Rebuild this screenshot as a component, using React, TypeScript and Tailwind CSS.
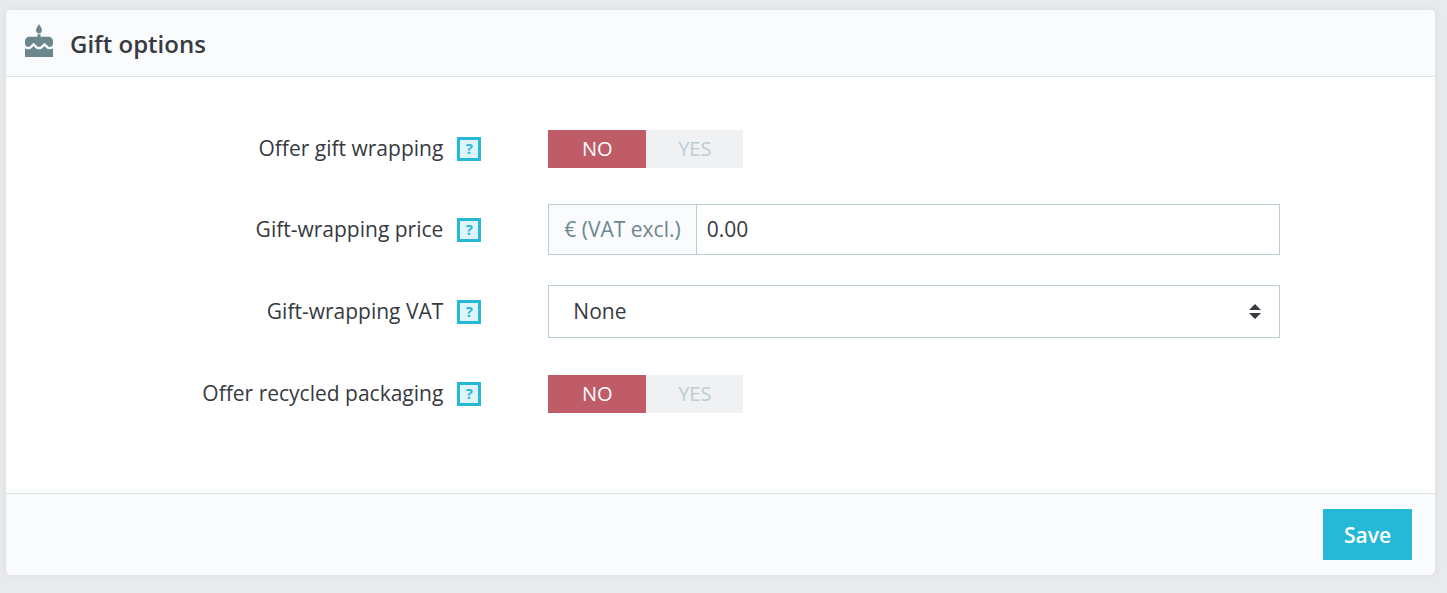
import { useId, useState, type ReactNode } from "react";

function CakeIcon() {
  return (
    <svg viewBox="3 0.8 18 21.2" className="h-[33px] w-7 shrink-0" fill="#6c868e" aria-hidden="true">
      <path d="M12 0.8C11.4 2 10.1 3.3 10.1 4.8c0 1.2.85 2.1 1.9 2.1s1.9-.9 1.9-2.1C13.9 3.3 12.6 2 12 0.8z" />
      <path d="M16.6 15.99l-1.07-1.07-1.08 1.07c-1.3 1.3-3.58 1.31-4.89 0l-1.07-1.07-1.09 1.07C6.75 16.64 5.88 17 4.96 17c-.73 0-1.4-.23-1.96-.61V22h18v-5.61c-.56.38-1.23.61-1.96.61-.92 0-1.79-.36-2.44-1.01z" />
      <path d="M18 9h-5V7.4h-2V9H6c-1.66 0-3 1.34-3 3v1.54c0 1.08.88 1.96 1.96 1.96.52 0 1.02-.2 1.38-.57l2.14-2.13 2.13 2.13c.74.74 2.03.74 2.77 0l2.14-2.13 2.13 2.13c.37.37.86.57 1.38.57 1.08 0 1.96-.88 1.96-1.96V12C21 10.34 19.66 9 18 9z" />
    </svg>
  );
}

function Row({ id, label, children }: { id: string; label: string; children: ReactNode }) {
  return (
    <div className="flex min-h-[51px] items-center">
      <div className="flex w-1/3 items-center justify-end gap-[14px] pr-px">
        <label id={`${id}-label`} htmlFor={id} className="pb-0.5 text-right">
          {label}
        </label>
        <button
          type="button"
          className="flex size-6 shrink-0 items-center justify-center border-[3px] border-[#25b9d7] bg-[#def4f9] text-[15px] leading-none font-bold text-[#25b9d7]"
        >
          ?
        </button>
      </div>
      <div className="mr-[155px] ml-[66px] min-w-0 flex-1">{children}</div>
    </div>
  );
}

function Switch({ id }: { id: string }) {
  const [on, setOn] = useState(false);
  const base = "flex h-[38px] items-center justify-center text-[20px]";
  const idle = "bg-[#eff1f2] text-[#bbcdd2]";
  return (
    <div role="radiogroup" aria-labelledby={`${id}-label`} className="flex">
      <label className={`${base} w-[98px] ${on ? idle : "bg-[#c05c67] text-white"}`}>
        <input id={id} type="radio" name={id} checked={!on} onChange={() => setOn(false)} className="sr-only" />
        NO
      </label>
      <label className={`${base} w-[97px] ${on ? "bg-[#70b580] text-white" : idle}`}>
        <input type="radio" name={id} checked={on} onChange={() => setOn(true)} className="sr-only" />
        YES
      </label>
    </div>
  );
}

export default function App() {
  const uid = useId();
  const wrapping = `${uid}wrapping`;
  const price = `${uid}price`;
  const vat = `${uid}vat`;
  const recycled = `${uid}recycled`;

  return (
    <main className="min-h-screen bg-[#e9eaec] pt-[9px] pr-3 pb-[18px] pl-1.5 font-['Open_Sans',sans-serif] text-[21px] leading-7 text-[#363a41]">
      <form
        onSubmit={(e) => e.preventDefault()}
        className="overflow-hidden rounded-[6px] bg-white shadow-[0_0_6px_2px_rgba(0,0,0,0.04)]"
      >
        <header className="flex h-[68px] items-center gap-[17px] border-t border-b border-[#dbe6e9] bg-[#fafbfc] pb-[5px] pl-[19px]">
          <CakeIcon />
          <h2 className="pt-1.5 text-[24px] font-semibold">Gift options</h2>
        </header>

        <div className="flex flex-col gap-[30px] pt-[46px] pb-[74px]">
          <Row id={wrapping} label="Offer gift wrapping">
            <Switch id={wrapping} />
          </Row>
          <Row id={price} label="Gift-wrapping price">
            <div className="flex h-[51px] border border-[#bbcdd2]">
              <span className="flex items-center border-r border-[#bbcdd2] bg-[#fafbfc] px-[15px] pb-0.5 text-[#6c868e]">
                € (VAT excl.)
              </span>
              <input
                id={price}
                type="text"
                defaultValue="0.00"
                className="min-w-0 flex-1 px-[10px] pb-0.5 outline-none"
              />
            </div>
          </Row>
          <Row id={vat} label="Gift-wrapping VAT">
            <div className="relative">
              <select
                id={vat}
                className="block h-[53px] w-full appearance-none border border-[#bbcdd2] bg-white px-6 pb-0.5 outline-none"
              >
                <option>None</option>
              </select>
              <svg
                viewBox="0 0 12 15"
                className="pointer-events-none absolute top-[19px] right-[19px] h-[15px] w-3"
                fill="#363a41"
                aria-hidden="true"
              >
                <path d="M0 6L6 0l6 6zM0 9h12l-6 6z" />
              </svg>
            </div>
          </Row>
          <Row id={recycled} label="Offer recycled packaging">
            <Switch id={recycled} />
          </Row>
        </div>

        <footer className="flex justify-end border-t border-[#dbe6e9] bg-[#fafbfc] py-[15px] pr-[23px]">
          <button type="submit" className="h-[51px] rounded-[1px] bg-[#25b9d7] px-[21px] font-semibold text-white">
            Save
          </button>
        </footer>
      </form>
    </main>
  );
}
